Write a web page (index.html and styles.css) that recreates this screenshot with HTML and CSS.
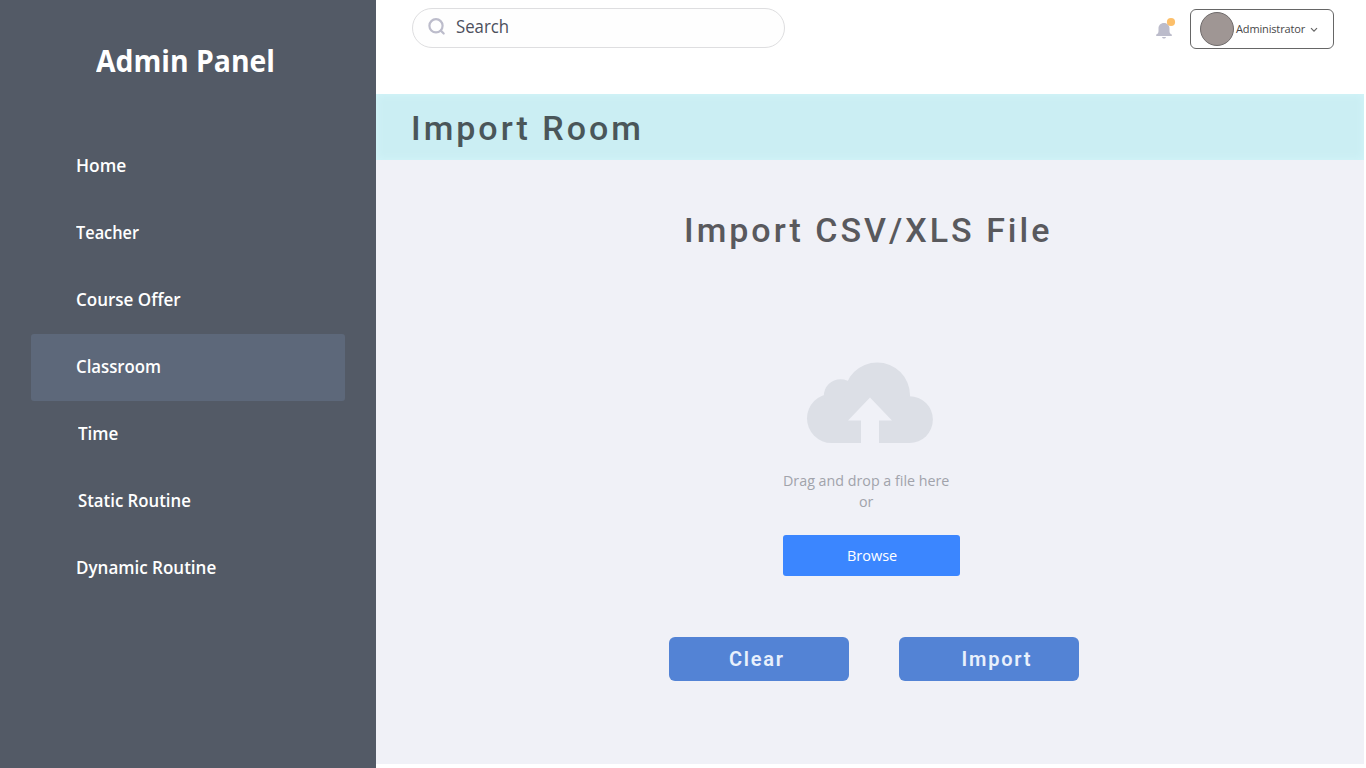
FILE: index.html
```html
<!DOCTYPE html>
<html lang="en">
<head>
<meta charset="utf-8">
<title>Import Room</title>
<link rel="stylesheet" href="styles.css">
</head>
<body>
<div class="app">
  <aside class="sidebar">
    <h1 class="brand"><span class="narrow">Admin Panel</span></h1>
    <nav class="menu">
      <a class="item"><span class="narrow wide">Home</span></a>
      <a class="item"><span class="narrow tight">Teacher</span></a>
      <a class="item"><span class="narrow">Course Offer</span></a>
      <a class="item active"><span class="narrow snug">Classroom</span></a>
      <a class="item indent"><span class="narrow">Time</span></a>
      <a class="item indent"><span class="narrow snug">Static Routine</span></a>
      <a class="item"><span class="narrow">Dynamic Routine</span></a>
    </nav>
  </aside>
  <main class="main">
    <header class="topbar">
      <div class="search">
        <svg class="search-icon" width="18" height="18" viewBox="0 0 18 18"><circle cx="8" cy="7.8" r="6.6"/><path d="M12.8 12.6l2.900 2.900"/></svg>
        <span class="narrow snug">Search</span>
      </div>
      <svg class="bell" width="22" height="26" viewBox="0 0 22 26"><path class="bell-body" d="M2.200 22v-1.600c1.600-.6 2.300-1.400 2.300-3.400v-2.600C4.500 11.500 6.600 9 10 9s5.500 2.500 5.500 5.400V17c0 2 .7 2.800 2.300 3.400V22zM8 23h4c-.3 1-1 1.500-2 1.500S8.300 24 8 23z"/><circle class="dot" cx="17" cy="8" r="4.100"/></svg>
      <div class="account">
        <i class="avatar"></i>
        <span class="account-name">Administrator</span>
        <svg class="chevron" width="8" height="6" viewBox="0 0 8 6"><path d="M1 1.200l3 3 3-3"/></svg>
      </div>
    </header>
    <section class="banner"><h2>Import Room</h2></section>
    <section class="content">
      <h2 class="heading">Import CSV/XLS File</h2>
      <svg class="cloud" width="128" height="84" viewBox="0 0 128 84">
        <circle cx="25.600" cy="57.400" r="24.600"/>
        <circle cx="34.600" cy="35" r="16.800"/>
        <circle cx="71.200" cy="34.300" r="32.800"/>
        <circle cx="103.500" cy="58.600" r="23.400"/>
        <path d="M25.600 40h78v42h-78z"/>
        <path class="arrow" d="M64 36.500l22 23H73V83H55V59.500H42z"/>
      </svg>
      <p class="hint"><span class="narrow">Drag and drop a file here</span></p>
      <p class="hint or"><span class="narrow">or</span></p>
      <button class="browse"><span class="narrow wide">Browse</span></button>
      <div class="actions">
        <button class="action clear">Clear</button>
        <button class="action import">Import</button>
      </div>
    </section>
  </main>
</div>
</body>
</html>
```
FILE: styles.css
```css
* { box-sizing: border-box; margin: 0; padding: 0; }
body { background: #fff; font-family: "Open Sans", "Noto Sans", sans-serif; }
.app { display: flex; width: 1366px; height: 768px; overflow: hidden; }

/* Condensed text widths */
.narrow { display: inline-block; transform: scaleX(.945); transform-origin: left center; }
.wide { transform: scaleX(.965); }
.snug { transform: scaleX(.932); }
.tight { transform: scaleX(.907); }

.sidebar { width: 376px; background: #535a66; color: #fff; padding: 35px 31px 0; }
.brand { height: 51px; padding-left: 65px; font-size: 30px; line-height: 51px; font-weight: 700; white-space: nowrap; }
.menu { margin-top: 47px; }
.item { display: block; height: 67px; padding-left: 45px; font-size: 18px; line-height: 64px; font-weight: 600; white-space: nowrap; }
.indent { padding-left: 47px; }
.active { background: #5d687a; border-radius: 3px; }

.main { width: 988px; height: 764px; background: #f0f1f7; }
.topbar { display: flex; align-items: flex-start; height: 94px; padding: 8px 0 0 36px; background: #fff; }
.search { display: flex; width: 373px; height: 40px; padding-left: 15px; border: 1px solid #dedee0; border-radius: 20px; background: #fefefe; color: #4d4f5c; font-size: 18px; line-height: 35px; }
.search-icon { margin: 9px 10px 0 0; fill: none; stroke: #bcbccb; stroke-width: 2.2; stroke-linecap: round; }
.bell { margin: 6px 0 0 369px; }
.bell-body { fill: #bcbccb; }
.dot { fill: #fcbf6a; }
.account { display: flex; align-items: center; width: 144px; height: 40px; margin: 1px 0 0 14px; padding-left: 9px; border: 1px solid #666; border-radius: 6px; color: #484848; font-size: 11px; font-weight: 500; }
.account-name { width: 71px; padding-bottom: 1px; letter-spacing: -.15px; }
.avatar { width: 34px; height: 34px; margin-right: 2px; border: 1px solid #6f6b6b; border-radius: 50%; background: #9f9694; }
.chevron { margin: 2px 0 0 3px; fill: none; stroke: #666; stroke-width: 1.2; }

.banner { height: 66px; padding-left: 35px; background: #cbeef3; box-shadow: inset 0 0 8px #d3f5fa; color: #4a5659; font-family: Roboto, sans-serif; }
.banner h2, .heading { font-size: 34px; line-height: 68px; font-weight: 500; letter-spacing: 3px; white-space: nowrap; }

.content { display: flex; flex-direction: column; height: 604px; }
.heading { margin: 36px 0 0 308px; height: 68px; font-family: Roboto, sans-serif; color: #59595d; }
.cloud { flex: none; margin: 97px 0 0 430px; fill: #dcdfe6; }
.arrow { fill: #f0f1f7; }
.hint { height: 21px; margin-left: 406.5px; line-height: 21px; font-size: 15px; color: #a1a3ab; }
.hint .narrow { transform: scaleX(.952); }
.cloud + .hint { margin-top: 25px; }
.hint.or { margin-left: 482.5px; }
button { border: 0; text-align: left; font-family: inherit; }
.browse { width: 177px; height: 41px; margin: 23px 0 0 407px; padding-left: 64px; border-radius: 3px; background: #3b86ff; color: #fff; font-size: 15px; line-height: 41px; }
.actions { display: flex; gap: 50px; margin: 61px 0 0 293px; }
.action { width: 180px; height: 44px; border-radius: 6px; background: #5383d5; color: #e8f0fc; font: 600 20px/44px Roboto, sans-serif; letter-spacing: 1.75px; }
.clear { padding-left: 60px; }
.import { padding-left: 62.5px; }
```
